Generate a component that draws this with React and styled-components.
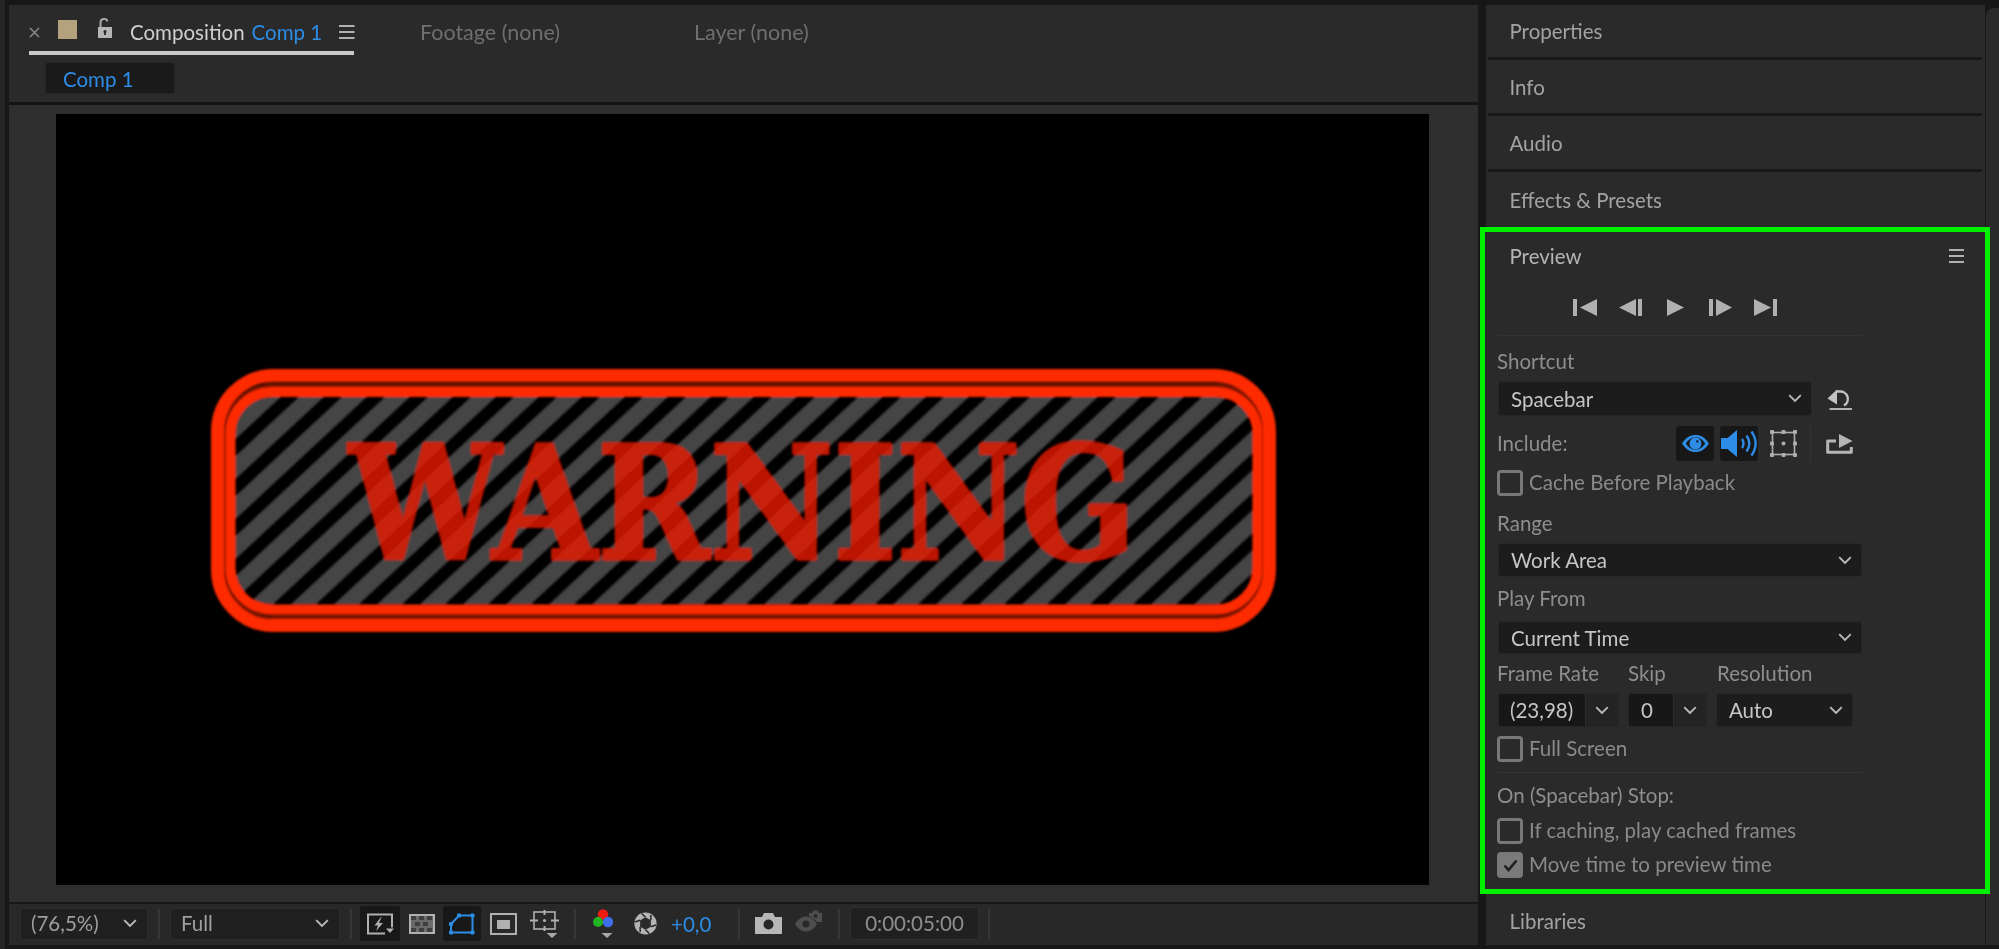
import React from "react";
import styled, { createGlobalStyle } from "styled-components";

const Global = createGlobalStyle`
  html, body { margin: 0; padding: 0; background: #171717; overflow: hidden; }
  * { box-sizing: border-box; }
  #root { width: 1999px; height: 949px; }
`;

const BLUE = "#2c8ce6";
const ICON = "#b0b0b0";

const Page = styled.div`
  width: 1999px;
  height: 949px;
  display: flex;
  background: #171717;
  color: #a3a3a3;
  font-family: Lato, "Open Sans", sans-serif;
  font-size: 20.5px;
  line-height: 24px;
  filter: blur(0.35px);
  overflow: hidden;
`;
const Rail = styled.div`
  width: 5px;
  margin-right: 4px;
  background: #252525;
`;
const CompPanel = styled.section`
  width: 1469px;
  margin-top: 5px;
  height: 940px;
  display: flex;
  flex-direction: column;
  background: #2a2a2a;
`;
const TabBar = styled.div`
  height: 50px;
  display: flex;
  padding-left: 20px;
`;
const ActiveTab = styled.div`
  width: 325px;
  height: 50px;
  padding-top: 8px;
  display: flex;
  align-items: flex-start;
  border-bottom: 4px solid #c9c9c9;
`;
const TabInner = styled.div`
  height: 38px;
  display: flex;
  align-items: center;
  color: #cfcfcf;
  white-space: nowrap;
`;
const Swatch = styled.span`
  width: 19px;
  height: 19px;
  margin: 0 20px 6px 18px;
  background: #b4a27f;
`;
const Accent = styled.span`
  color: ${BLUE};
  margin-left: 7px;
`;
const BurgerGap = styled.span`
  width: 17px;
`;
const GhostTab = styled.div`
  width: ${(p) => p.$w}px;
  padding-top: 15px;
  font-size: 21.5px;
  color: #6f6f6f;
  white-space: nowrap;
`;
const SubBar = styled.div`
  height: 50px;
  padding: 7px 0 0 36px;
  border-bottom: 3px solid #141414;
`;
const CompChip = styled.div`
  width: 130px;
  height: 32px;
  padding-left: 17px;
  line-height: 33px;
  color: ${BLUE};
  background: #1a1a1a;
  border: 1px solid #262626;
  border-radius: 3px;
`;
const Viewer = styled.div`
  flex: 1;
  padding: 9px 49px 0 47px;
  background: #2e2e2e;
`;
const Art = styled.svg`
  display: block;
  background: #000;
`;
const Footer = styled.div`
  height: 43px;
  flex: none;
  padding: 0 0 2px 11px;
  display: flex;
  align-items: center;
  border-top: 2px solid #171717;
  background: #282828;
`;
const FootSelect = styled.div`
  width: ${(p) => p.$w}px;
  height: 32px;
  margin-left: ${(p) => p.$ml || 0}px;
  padding: 0 10px 1px 10px;
  display: flex;
  align-items: center;
  justify-content: space-between;
  color: #9f9f9f;
  background: #202020;
  border: 1px solid #2d2d2d;
  border-radius: 3px;
`;
const VSep = styled.div`
  width: 2px;
  height: 30px;
  margin-left: ${(p) => p.$ml}px;
  background: #363636;
`;
const Slot = styled.div`
  width: ${(p) => p.$w}px;
  margin-left: ${(p) => p.$ml || 0}px;
  height: 35px;
  display: flex;
  align-items: center;
  justify-content: center;
  border-radius: 3px;
  background: ${(p) => (p.$on ? "#181818" : "transparent")};
`;
const Exposure = styled.span`
  margin-left: 10px;
  width: 38px;
  color: ${BLUE};
  white-space: nowrap;
`;
const TimeBox = styled.div`
  width: 129px;
  height: 33px;
  margin-left: 10px;
  line-height: 30px;
  text-align: center;
  color: #8f8f8f;
  background: #202020;
  border: 1px solid #2f2f2f;
  border-radius: 3px;
`;
const Gutter = styled.div`
  width: 8px;
`;
const SideColumn = styled.aside`
  width: 499px;
  height: 940px;
  margin-top: 5px;
  display: flex;
  flex-direction: column;
  background: #2a2a2a;
`;
const Collapsed = styled.div`
  height: ${(p) => p.$h}px;
  padding: ${(p) => p.$pt || 0}px 0 0 23.5px;
  display: flex;
  align-items: center;
  color: #a3a3a3;
`;
const RowRule = styled.div`
  height: 3px;
  margin: 0 3px 0 1.5px;
  background: #191919;
`;
const PreviewPanel = styled.section`
  position: relative;
  height: 657px;
  margin: 5px 0 6px -1px;
  background: #2a2a2a;
  outline: 5.5px solid #00f000;
`;
const PanelTitle = styled.div`
  height: 44px;
  padding: 4px 21px 0 24.5px;
  display: flex;
  align-items: center;
  justify-content: space-between;
  color: #b4b4b4;
`;
const Body = styled.div`
  width: 366px;
  margin-left: 12px;
`;
const Transport = styled.div`
  height: 60px;
  padding: 23px 0 0 65.5px;
  display: flex;
  border-bottom: 1px solid #323232;
`;
const TransportSlot = styled.div`
  width: 45px;
  height: 17px;
  display: flex;
  justify-content: center;
`;
const Label = styled.div`
  height: 24px;
  margin-top: ${(p) => p.$mt}px;
  line-height: 22px;
  color: #8e8e8e;
  white-space: nowrap;
`;
const Row = styled.div`
  display: flex;
  align-items: center;
  margin-top: ${(p) => p.$mt}px;
  height: ${(p) => p.$h}px;
`;
const Select = styled.div`
  width: ${(p) => p.$w}px;
  height: 100%;
  margin-left: ${(p) => p.$ml || 1}px;
  padding: 0 9px 0 12px;
  display: flex;
  align-items: center;
  justify-content: space-between;
  color: #c6c6c6;
  background: #1c1c1c;
  border: 1px solid #262626;
  border-radius: 3px;
`;
const Combo = styled.div`
  width: ${(p) => p.$w}px;
  height: 100%;
  margin-left: ${(p) => p.$ml}px;
  display: flex;
  background: #232323;
  border: 1px solid #262626;
  border-radius: 3px;
  overflow: hidden;
`;
const ComboValue = styled.div`
  width: ${(p) => p.$w}px;
  padding-left: ${(p) => p.$pad}px;
  line-height: 32px;
  color: #c6c6c6;
  background: #171717;
  border-right: 1px solid #2c2c2c;
`;
const ComboArrow = styled.div`
  flex: 1;
  display: flex;
  align-items: center;
  justify-content: center;
`;
const SmallHead = styled.div`
  display: flex;
  height: 24px;
  margin-top: 8px;
  line-height: 22px;
  color: #8e8e8e;
`;
const HeadCell = styled.div`
  width: ${(p) => p.$w}px;
  white-space: nowrap;
`;
const IconToggle = styled.div`
  width: 38px;
  height: 35px;
  margin-left: ${(p) => p.$ml || 0}px;
  display: flex;
  align-items: center;
  justify-content: center;
  background: ${(p) => (p.$on ? "#171717" : "transparent")};
  border-radius: 3px;
`;
const ThinSep = styled.div`
  width: 1px;
  height: 37px;
  margin-left: ${(p) => p.$ml}px;
  background: #323232;
`;
const Include = styled.span`
  width: 179px;
  padding-bottom: 2px;
  color: #8e8e8e;
`;
const CheckRow = styled.label`
  display: flex;
  align-items: center;
  height: 26px;
  padding-bottom: 2px;
  margin-top: ${(p) => p.$mt}px;
  color: #8a8a8a;
  white-space: nowrap;
`;
const Box = styled.span`
  width: 26px;
  height: 26px;
  margin: 2px 6px 0 0;
  display: flex;
  align-items: center;
  justify-content: center;
  flex: none;
  border: 3px solid #787878;
  border-radius: 4px;
  background: ${(p) => (p.$checked ? "#7b7b7b" : "transparent")};
`;
const FormRule = styled.div`
  height: 1px;
  margin-top: 10px;
  background: #333;
`;
const Edge = styled.div`
  width: 13px;
  margin: 8px 0 4px 1px;
  background: #2a2a2a;
  border-top-left-radius: 8px;
`;

const Chevron = ({ size = 14, color = "#b9b9b9" }) => (
  <svg width={size} height={size * 0.6} viewBox="0 0 14 8.4" fill="none" style={{ flex: "none" }}>
    <path d="M1.2 1.2 7 7 12.8 1.2" stroke={color} strokeWidth="1.9" />
  </svg>
);
const Burger = () => (
  <svg width="15.5" height="14" viewBox="0 0 15.5 14" fill={ICON}>
    <rect width="15.5" height="2" />
    <rect y="6" width="15.5" height="2" />
    <rect y="12" width="15.5" height="2" />
  </svg>
);
const Tri = ({ color = "#a8a8a8" }) => <path d="M0 0h11l-5.5 5z" fill={color} />;

const CloseX = () => (
  <svg width="11" height="11" viewBox="0 0 11 11" style={{ marginTop: 1 }}>
    <path d="M1 1 10 10M10 1 1 10" stroke="#8a8a8a" strokeWidth="1.5" />
  </svg>
);
const Lock = () => (
  <svg width="16" height="20" viewBox="0 0 16 20" style={{ marginRight: 17, marginBottom: 8 }}>
    <path d="M3.5 9V4.5a3.6 3.6 0 0 1 7-1.2" fill="none" stroke="#a9a9a9" strokeWidth="2" />
    <path fillRule="evenodd" d="M1 9h14v11H1zM8 12a1.6 1.6 0 0 0-.9 2.9V17h1.8v-2.1A1.6 1.6 0 0 0 8 12z" fill="#b5b5b5" />
  </svg>
);
const FastPreview = () => (
  <svg width="28" height="22" viewBox="0 0 28 22" fill="none">
    <path d="M19 20.5H2V1.5h24v13" stroke={ICON} strokeWidth="2" />
    <path d="M15 4 8.5 12.5H12L10 18l7-8h-4l2.5-6z" fill={ICON} />
    <path d="M20 15.5h8l-4 4.5z" fill={ICON} />
  </svg>
);
const Checker = () => (
  <svg width="26" height="20" viewBox="0 0 26 20">
    <rect x="1" y="1" width="24" height="18" fill="#6a6a6a" stroke={ICON} strokeWidth="2" />
    {[[2, 2], [10, 2], [18, 2], [6, 8], [14, 8], [2, 14], [10, 14], [18, 14]].map(([x, y]) => (
      <rect key={`${x}-${y}`} x={x} y={y} width="5" height="4" fill="#3e3e3e" />
    ))}
  </svg>
);
const MaskIcon = () => (
  <svg width="26" height="22" viewBox="0 0 26 22" fill="none">
    <path d="M2 11 10 2.500H23.500V19.500H2z" stroke={BLUE} strokeWidth="2" />
    {[[0, 9], [8, 0.5], [21.5, 0.5], [21.5, 17.5], [0, 17.5]].map(([x, y]) => (
      <rect key={`${x}-${y}`} x={x} y={y} width="4" height="4" rx="1" fill={BLUE} />
    ))}
  </svg>
);
const RegionIcon = () => (
  <svg width="27" height="22" viewBox="0 0 27 22">
    <rect x="1" y="1" width="25" height="20" fill="none" stroke={ICON} strokeWidth="2" />
    <rect x="7" y="7" width="13" height="9" fill={ICON} />
  </svg>
);
const GuidesIcon = () => (
  <svg width="29" height="28" viewBox="0 0 29 28" fill="none">
    <rect x="4" y="2" width="21" height="17" stroke={ICON} strokeWidth="1.6" />
    <path d="M0 10.5h8M21 10.5h8M14.5 0v5M14.5 16v5" stroke={ICON} strokeWidth="2" />
    <circle cx="14.5" cy="10.5" r="1.6" fill={ICON} />
    <g transform="translate(16.5 23)"><Tri /></g>
  </svg>
);
const ChannelIcon = () => (
  <svg width="20" height="29" viewBox="0 0 20 29">
    <circle cx="10" cy="5.5" r="5.2" fill="#f01c12" />
    <circle cx="5" cy="13" r="5" fill="#22b522" />
    <circle cx="15" cy="13" r="5.2" fill="#3f6fe8" />
    <g transform="translate(8.5 24)"><Tri /></g>
  </svg>
);
const ShutterIcon = () => (
  <svg width="23" height="23" viewBox="0 0 24 24">
    <circle cx="12" cy="12" r="11.6" fill="#b4b4b4" />
    <path d="M12 5.500 L8 1.500M17.600 8.700 L17.500 3M17.600 15.300 L23 13.500M12 18.500 L16 22.500M6.400 15.300 L6.500 21M6.400 8.700 L1 10.500" stroke="#2a2a2a" strokeWidth="1.6" />
    <path d="M12 5.500 17.600 8.700v6.600L12 18.500l-5.600-3.200V8.700z" fill="#2a2a2a" />
  </svg>
);
const CameraIcon = () => (
  <svg width="27" height="21" viewBox="0 0 27 21">
    <path fillRule="evenodd" d="M0 4h7L9 0h9l2 4h7v17H0zM13.500 6.500a5 5 0 1 0 0 10 5 5 0 0 0 0-10z" fill="#b7b7b7" />
  </svg>
);
const GhostEye = () => (
  <svg width="27" height="22" viewBox="0 0 27 22" style={{ marginBottom: 6 }}>
    <path fillRule="evenodd" d="M0 14c3-5 7-7.500 11-7.500s8 2.500 11 7.500c-3 5-7 7.500-11 7.500S3 19 0 14zm11-3.500a3.500 3.500 0 1 0 0 7 3.500 3.500 0 0 0 0-7z" fill="#4e4e4e" />
    <path fillRule="evenodd" d="M14 3h3l1.500-2.500h4L24 3h3v9h-5c-2-2-4-4-8-6zm6.500 1a2 2 0 1 0 0 4 2 2 0 0 0 0-4z" fill="#4e4e4e" />
  </svg>
);

const TStart = () => (
  <svg width="24" height="17" viewBox="0 0 24 17" fill={ICON}><rect width="4" height="17" /><path d="M7 8.500 24 0v17z" /></svg>
);
const TBack = () => (
  <svg width="23" height="17" viewBox="0 0 23 17" fill={ICON}><path d="M0 8.500 17 0v17z" /><rect x="19" width="4" height="17" /></svg>
);
const TPlay = () => (
  <svg width="17" height="17" viewBox="0 0 17 17" fill={ICON}><path d="M0 0 17 8.500 0 17z" /></svg>
);
const TFwd = () => (
  <svg width="23" height="17" viewBox="0 0 23 17" fill={ICON}><rect width="4" height="17" /><path d="M7 0 23 8.500 7 17z" /></svg>
);
const TEnd = () => (
  <svg width="23" height="17" viewBox="0 0 23 17" fill={ICON}><path d="M0 0 17 8.500 0 17z" /><rect x="19" width="4" height="17" /></svg>
);
const RevertIcon = () => (
  <svg width="26" height="23" viewBox="0 0 26 23" fill="none" style={{ marginLeft: 15 }}>
    <path d="M9 4.500h3.500a7.500 7.500 0 0 1 4.500 14" stroke="#c2c2c2" strokeWidth="2.400" />
    <path d="M0.500 11.500 10 2.500v15z" fill="#c2c2c2" />
    <path d="M2.500 22h22.500" stroke="#c2c2c2" strokeWidth="1.800" />
  </svg>
);
const EyeIcon = () => (
  <svg width="27" height="19" viewBox="0 0 27 19">
    <path fillRule="evenodd" d="M0 9.500C3.500 3.500 8.500 1 13.500 1S23.500 3.500 27 9.500C23.500 15.500 18.500 18 13.500 18S3.500 15.500 0 9.500zm13.500-6.200c-4 0-7.300 2.500-9.700 6.200 2.400 3.700 5.700 6.200 9.700 6.200s7.300-2.500 9.700-6.200c-2.400-3.700-5.700-6.200-9.700-6.200z" fill={BLUE} />
    <path fillRule="evenodd" d="M13.500 3.500a6 6 0 1 1 0 12 6 6 0 0 1 0-12zm1.800 2.700a1.200 1.200 0 1 0 0 2.400 1.200 1.200 0 0 0 0-2.400z" fill={BLUE} />
  </svg>
);
const SpeakerIcon = () => (
  <svg width="36" height="27" viewBox="0 0 36 27" fill="none">
    <path d="M0 8h6.500L16 0v27l-9.500-8H0z" fill={BLUE} />
    <path d="M21 9c2 3 2 6 0 9M25.500 5.500c3.500 5 3.500 11 0 16M30.500 1.500c5.500 8 5.500 16 0 24" stroke={BLUE} strokeWidth="2.400" />
  </svg>
);
const SafeIcon = () => (
  <svg width="27" height="27" viewBox="0 0 27 27" fill="none" style={{ marginLeft: 12 }}>
    <rect x="2.500" y="2.500" width="22" height="22" stroke="#aeaeae" strokeWidth="1.600" />
    {[[0, 0], [23, 0], [0, 23], [23, 23], [11.5, 0], [11.5, 23], [0, 11.5], [23, 11.5]].map(([x, y]) => (
      <rect key={`${x}-${y}`} x={x} y={y} width="4" height="4" rx="1" fill="#aeaeae" />
    ))}
    <circle cx="13.500" cy="13.500" r="2" fill="#aeaeae" />
  </svg>
);
const ExportIcon = () => (
  <svg width="27" height="20" viewBox="0 0 27 20" fill="none" style={{ marginLeft: 15 }}>
    <path d="M10 7H1.700v11.300h23.600V13" stroke="#b5b5b5" strokeWidth="3" strokeLinejoin="round" />
    <path d="M13 0 26.500 7 13 14z" fill="#b5b5b5" />
  </svg>
);
const Tick = () => (
  <svg width="15" height="13" viewBox="0 0 15 13" fill="none">
    <path d="M1.500 6.500 5.500 11 13.500 1.500" stroke="#1f1f1f" strokeWidth="2.600" />
  </svg>
);

const stripeOffsets = Array.from({ length: 38 }, (_, k) => k - 6);

const WarningArt = () => (
  <Art width="1373" height="771" viewBox="56 114 1373 771">
    <defs>
      <clipPath id="plate">
        <rect x="235" y="397" width="1018" height="207" rx="36" />
      </clipPath>
      <filter id="soft" x="-5%" y="-15%" width="110%" height="130%">
        <feGaussianBlur stdDeviation="0.8" />
      </filter>
    </defs>
    <g filter="url(#soft)">
      <g clipPath="url(#plate)" stroke="#444" strokeWidth="17">
        {stripeOffsets.map((k) => {
          const x = 235 + k * 43;
          return <line key={k} x1={x - 215} y1={668} x2={x + 430} y2={68} />;
        })}
      </g>
      <g opacity="0.82">
        <text
          x="349"
          y="558.5"
          fontFamily="'DejaVu Serif', serif"
          fontWeight="700"
          fontSize="158"
          textLength="787"
          lengthAdjust="spacingAndGlyphs"
          fill="rgb(229,28,0)"
          stroke="rgb(229,28,0)"
          strokeWidth="3.5"
          strokeLinejoin="round"
        >
          WARNING
        </text>
      </g>
      <rect x="224.5" y="385" width="1040" height="232" rx="50" fill="none" stroke="#6f1200" strokeWidth="4" />
      <rect x="217.5" y="375.5" width="1052" height="250" rx="56" fill="none" stroke="#fe2a00" strokeWidth="13" />
      <rect x="230.5" y="392" width="1027" height="217.5" rx="42" fill="none" stroke="#fe2a00" strokeWidth="10" />
    </g>
  </Art>
);

export default function App() {
  return (
    <Page>
      <Global />
      <Rail />
      <CompPanel>
        <TabBar>
          <ActiveTab>
            <TabInner>
              <CloseX />
              <Swatch />
              <Lock />
              Composition<Accent>Comp 1</Accent>
              <BurgerGap />
              <Burger />
            </TabInner>
          </ActiveTab>
          <GhostTab $w={66} />
          <GhostTab $w={274}>Footage (none)</GhostTab>
          <GhostTab $w={200}>Layer (none)</GhostTab>
        </TabBar>
        <SubBar>
          <CompChip>Comp 1</CompChip>
        </SubBar>
        <Viewer>
          <WarningArt />
        </Viewer>
        <Footer>
          <FootSelect $w={128}>
            (76,5%)
            <Chevron />
          </FootSelect>
          <VSep $ml={10} />
          <FootSelect $w={170} $ml={10}>
            Full
            <Chevron />
          </FootSelect>
          <VSep $ml={10} />
          <Slot $w={40} $ml={8} $on><FastPreview /></Slot>
          <Slot $w={43}><Checker /></Slot>
          <Slot $w={38} $on><MaskIcon /></Slot>
          <Slot $w={45}><RegionIcon /></Slot>
          <Slot $w={36}><GuidesIcon /></Slot>
          <VSep $ml={12} />
          <Slot $w={54}><ChannelIcon /></Slot>
          <Slot $w={31}><ShutterIcon /></Slot>
          <Exposure>+0,0</Exposure>
          <VSep $ml={29} />
          <Slot $w={27} $ml={15}><CameraIcon /></Slot>
          <Slot $w={27} $ml={13}><GhostEye /></Slot>
          <VSep $ml={16} />
          <TimeBox>0:00:05:00</TimeBox>
          <VSep $ml={9} />
        </Footer>
      </CompPanel>
      <Gutter />
      <SideColumn>
        <Collapsed $h={52}>Properties</Collapsed>
        <RowRule />
        <Collapsed $h={53}>Info</Collapsed>
        <RowRule />
        <Collapsed $h={53}>Audio</Collapsed>
        <RowRule />
        <Collapsed $h={55}>Effects &amp; Presets</Collapsed>
        <PreviewPanel>
          <PanelTitle>
            Preview
            <Burger />
          </PanelTitle>
          <Body>
            <Transport>
              <TransportSlot><TStart /></TransportSlot>
              <TransportSlot><TBack /></TransportSlot>
              <TransportSlot><TPlay /></TransportSlot>
              <TransportSlot><TFwd /></TransportSlot>
              <TransportSlot><TEnd /></TransportSlot>
            </Transport>
            <Label $mt={14}>Shortcut</Label>
            <Row $mt={7} $h={35}>
              <Select $w={314}>
                Spacebar
                <Chevron />
              </Select>
              <RevertIcon />
            </Row>
            <Row $mt={10} $h={35}>
              <Include>Include:</Include>
              <IconToggle $on><EyeIcon /></IconToggle>
              <IconToggle $on $ml={6}><SpeakerIcon /></IconToggle>
              <SafeIcon />
              <ThinSep $ml={13} />
              <ExportIcon />
            </Row>
            <CheckRow $mt={9}>
              <Box />
              Cache Before Playback
            </CheckRow>
            <Label $mt={16}>Range</Label>
            <Row $mt={7} $h={34}>
              <Select $w={364}>
                Work Area
                <Chevron />
              </Select>
            </Row>
            <Label $mt={10}>Play From</Label>
            <Row $mt={10} $h={33}>
              <Select $w={364}>
                Current Time
                <Chevron />
              </Select>
            </Row>
            <SmallHead>
              <HeadCell $w={131}>Frame Rate</HeadCell>
              <HeadCell $w={89}>Skip</HeadCell>
              <HeadCell $w={146}>Resolution</HeadCell>
            </SmallHead>
            <Row $mt={7} $h={34}>
              <Combo $w={121} $ml={1}>
                <ComboValue $w={87} $pad={11}>(23,98)</ComboValue>
                <ComboArrow><Chevron /></ComboArrow>
              </Combo>
              <Combo $w={79} $ml={9}>
                <ComboValue $w={45} $pad={12}>0</ComboValue>
                <ComboArrow><Chevron /></ComboArrow>
              </Combo>
              <Select $w={137} $ml={9}>
                Auto
                <Chevron />
              </Select>
            </Row>
            <CheckRow $mt={9}>
              <Box />
              Full Screen
            </CheckRow>
            <FormRule />
            <Label $mt={11}>On (Spacebar) Stop:</Label>
            <CheckRow $mt={10}>
              <Box />
              If caching, play cached frames
            </CheckRow>
            <CheckRow $mt={8}>
              <Box $checked><Tick /></Box>
              Move time to preview time
            </CheckRow>
          </Body>
        </PreviewPanel>
        <Collapsed $h={50} $pt={2}>Libraries</Collapsed>
      </SideColumn>
      <Edge />
    </Page>
  );
}
